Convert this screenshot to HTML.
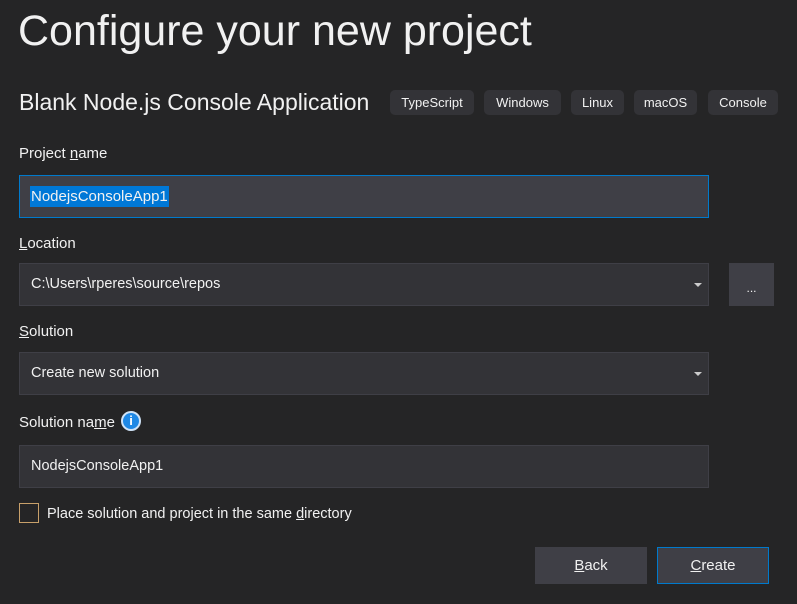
<!DOCTYPE html>
<html><head><style>
body{margin:0;width:797px;height:604px;background:#252526;color:#f1f1f1;font-family:"Liberation Sans",sans-serif;position:relative;overflow:hidden}
div{position:absolute;box-sizing:border-box}
.t{white-space:nowrap}
.lbl{font-size:15px;left:19px}
.tag{top:90px;height:25px;background:#333337;border-radius:5px;font-size:13px;text-align:center;line-height:25px}
.box{left:19px;width:690px;height:43px;background:#333337;border:1px solid #3f3f46;font-size:15px;line-height:41px;padding-left:11px}
.arr{position:absolute;right:6px;top:19px;width:0;height:0;border-left:4px solid transparent;border-right:4px solid transparent;border-top:4px solid #ccc}
.btn{top:547px;width:112px;height:37px;background:#3f3f46;font-size:15px;text-align:center;line-height:37px}
</style></head><body>
<div class="t" style="left:18px;top:7px;font-size:43px;font-weight:300">Configure your new project</div>
<div class="t" style="left:19px;top:89px;font-size:23px">Blank Node.js Console Application</div>
<div class="tag" style="left:390px;width:84px">TypeScript</div>
<div class="tag" style="left:484px;width:77px">Windows</div>
<div class="tag" style="left:571px;width:53px">Linux</div>
<div class="tag" style="left:634px;width:63px">macOS</div>
<div class="tag" style="left:708px;width:70px">Console</div>
<div class="t lbl" style="top:145px">Project <u>n</u>ame</div>
<div class="box" style="top:175px;background:#3f3f46;border-color:#007acc;padding-left:10px"><span style="background:#0078d7;padding:2px 1px">NodejsConsoleApp1</span></div>
<div class="t lbl" style="top:235px"><u>L</u>ocation</div>
<div class="box" style="top:263px;font-size:14.5px">C:\Users\rperes\source\repos<span class="arr"></span></div>
<div style="left:729px;top:263px;width:45px;height:43px;background:#3f3f46;font-size:12px;text-align:center;line-height:50px">...</div>
<div class="t lbl" style="top:323px"><u>S</u>olution</div>
<div class="box" style="top:352px;font-size:14.5px">Create new solution<span class="arr"></span></div>
<div class="t lbl" style="top:414px">Solution na<u>m</u>e</div>
<div style="left:121px;top:411px;width:20px;height:20px;border-radius:50%;background:#1e88e5;border:2px solid #cfe3f7;color:#fff;font-size:13px;font-weight:bold;text-align:center;line-height:16px">i</div>
<div class="box" style="top:445px;font-size:14.5px">NodejsConsoleApp1</div>
<div style="left:19px;top:503px;width:20px;height:20px;border:1px solid #c8a06a"></div>
<div class="t" style="left:47px;top:506px;font-size:14.5px">Place solution and project in the same <u>d</u>irectory</div>
<div class="btn" style="left:535px"><u>B</u>ack</div>
<div class="btn" style="left:657px;border:1px solid #007acc;line-height:35px"><u>C</u>reate</div>
</body></html>
